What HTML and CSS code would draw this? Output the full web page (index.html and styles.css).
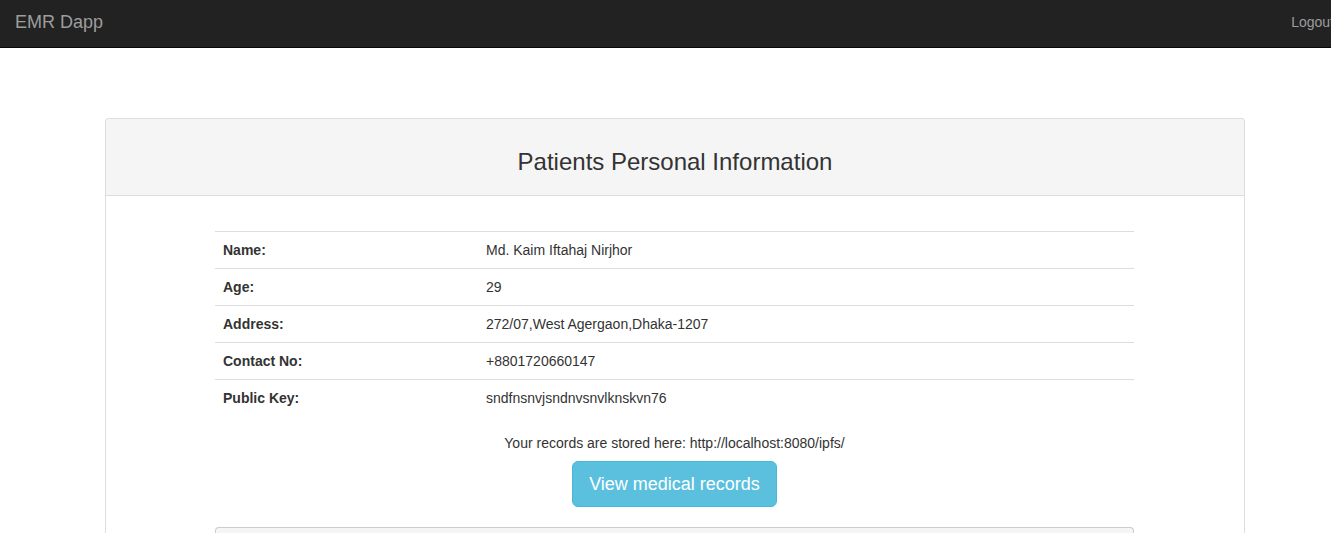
FILE: index.html
```html
<!DOCTYPE html>
<html lang="en">
<head>
<meta charset="utf-8">
<meta name="viewport" content="width=device-width, initial-scale=1">
<title>EMR Dapp</title>
<link rel="stylesheet" href="styles.css">
</head>
<body>
<nav class="navbar">
  <a class="navbar-brand" href="#">EMR Dapp</a>
  <a class="navbar-link" href="#">Logout</a>
</nav>
<main class="container">
  <section class="panel">
    <header class="panel-heading">
      <h1 class="panel-title">Patients Personal Information</h1>
    </header>
    <div class="panel-body">
      <table class="table">
        <tbody>
          <tr><th scope="row">Name:</th><td>Md. Kaim Iftahaj Nirjhor</td></tr>
          <tr><th scope="row">Age:</th><td>29</td></tr>
          <tr><th scope="row">Address:</th><td>272/07,West Agergaon,Dhaka-1207</td></tr>
          <tr><th scope="row">Contact No:</th><td>+8801720660147</td></tr>
          <tr><th scope="row">Public Key:</th><td>sndfnsnvjsndnvsnvlknskvn76</td></tr>
        </tbody>
      </table>
      <p class="records-note">Your records are stored here: http://localhost:8080/ipfs/</p>
      <button class="btn" type="button">View medical records</button>
      <div class="well"></div>
    </div>
  </section>
</main>
</body>
</html>
```

FILE: styles.css
```css
* {
  box-sizing: border-box;
}

body {
  margin: 0;
  overflow-x: hidden;
  background: #fff;
  color: #333;
  font-family: "Liberation Sans", Arial, sans-serif;
  font-size: 14px;
  line-height: 20px;
}

.navbar {
  display: flex;
  align-items: center;
  justify-content: space-between;
  margin-right: -3px;
  padding: 0 0 4px 15px;
  height: 48px;
  background: #222;
  border-bottom: 1px solid #080808;
}

.navbar a {
  color: #9d9d9d;
  text-decoration: none;
}

.navbar .navbar-brand {
  font-size: 18px;
}

.container {
  max-width: 1171px;
  margin: 70px auto 0;
  padding: 0 6px 0 25px;
}

.panel {
  border: 1px solid #ddd;
  border-radius: 4px;
  overflow: hidden;
}

.panel-heading {
  padding: 30px 16px 20px;
  background: #f5f5f5;
  border-bottom: 1px solid #ddd;
  text-align: center;
}

.panel-title {
  margin: 0;
  font-size: 24px;
  font-weight: 500;
  line-height: 26px;
}

.panel-body {
  display: flex;
  flex-direction: column;
  align-items: center;
  padding: 35px 110px 0 109px;
}

.table {
  width: 100%;
  margin-bottom: 17px;
  border-collapse: collapse;
  table-layout: fixed;
}

.table th,
.table td {
  padding: 8px;
  border-top: 1px solid #ddd;
  text-align: left;
  vertical-align: top;
}

.table th {
  width: 263px;
}

.records-note {
  margin: 0 0 8px;
}

.btn {
  margin-bottom: 20px;
  padding: 10px 16px;
  border: 1px solid #46b8da;
  border-radius: 6px;
  background: #5bc0de;
  color: #fff;
  font-family: inherit;
  font-size: 18px;
  line-height: 24px;
  cursor: pointer;
}

.well {
  width: 100%;
  height: 6px;
  border: 1px solid #ccc;
  border-bottom: 0;
  border-radius: 4px 4px 0 0;
  background: #f5f5f5;
}

.panel {
  border-bottom: 0;
  border-radius: 4px 4px 0 0;
}
```
